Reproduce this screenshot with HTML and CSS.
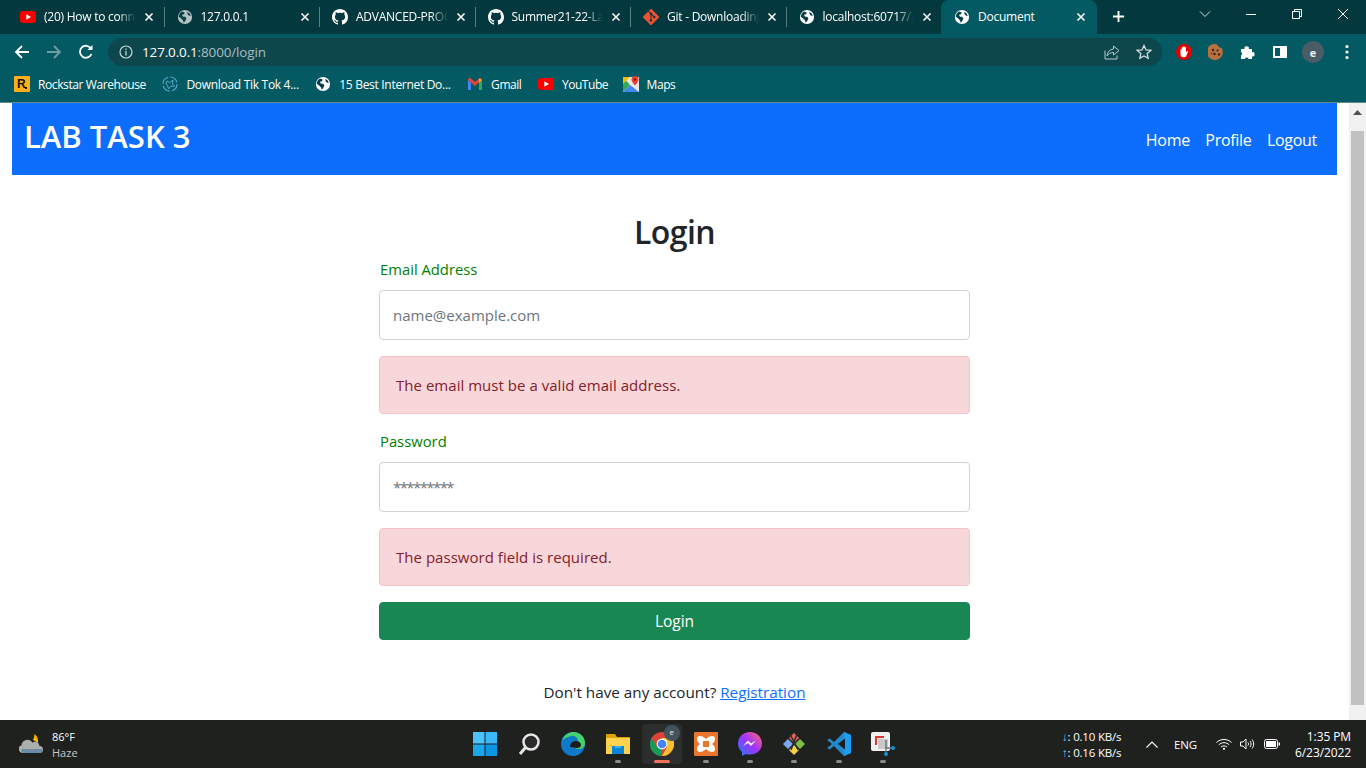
FILE: index.html
```html
<!DOCTYPE html>
<html lang="en">
<head>
<meta charset="utf-8">
<title>Document</title>
<link rel="stylesheet" href="styles.css">
</head>
<body>
<svg class="defs" width="0" height="0" aria-hidden="true">
  <defs>
    <symbol id="yt" viewBox="0 0 16 12"><rect width="16" height="12" rx="3" fill="#f00"/><path d="M6.300 3.200 11 6l-4.700 2.800z" fill="#fff"/></symbol>
    <symbol id="globe" viewBox="-1 -1 18 18"><circle cx="8" cy="8" r="8" fill="currentColor"/><path d="M4.500 1.800 7.600 3 7 5 4.600 5.600 5.700 7.600 8.200 7.800 9.600 9.600 8.400 12.200 6.600 14.600 5.600 11.600 3.400 9.400.9 7.600 2 4zM10.400 2.200l3.200 2.200.8 2.400-2.200-.4L11 5z" fill="#063f46"/></symbol>
    <symbol id="gh" viewBox="0 0 16 16"><path fill="currentColor" d="M8 0C3.580 0 0 3.580 0 8c0 3.540 2.290 6.530 5.470 7.590.4.070.55-.17.55-.38 0-.19-.01-.82-.01-1.490-2.010.37-2.530-.49-2.690-.94-.09-.23-.48-.94-.82-1.130-.28-.15-.68-.52-.01-.53.63-.01 1.080.58 1.230.82.720 1.210 1.870.87 2.330.66.070-.52.280-.87.510-1.070-1.780-.2-3.640-.89-3.640-3.950 0-.87.310-1.590.820-2.150-.08-.2-.36-1.020.080-2.120 0 0 .67-.21 2.200.82.640-.18 1.320-.27 2-.27s1.360.09 2 .27c1.530-1.040 2.200-.82 2.200-.82.440 1.100.16 1.920.08 2.120.51.56.82 1.270.82 2.150 0 3.070-1.870 3.750-3.650 3.950.29.25.54.73.54 1.480 0 1.070-.01 1.930-.01 2.200 0 .21.15.46.55.38A8.010 8.010 0 0 0 16 8c0-4.420-3.580-8-8-8z"/></symbol>
    <symbol id="git" viewBox="0 0 16 16"><path fill="#f05133" d="M15.700 7.300 8.700.3a1 1 0 0 0-1.400 0L5.800 1.800l1.800 1.800a1.200 1.200 0 0 1 1.500 1.500l1.800 1.800a1.200 1.200 0 1 1-.7.7L8.500 6v4.300a1.200 1.200 0 1 1-1-.1V5.900a1.200 1.200 0 0 1-.6-1.600L5.100 2.500.3 7.300a1 1 0 0 0 0 1.400l7 7a1 1 0 0 0 1.400 0l7-7a1 1 0 0 0 0-1.400z"/></symbol>
    <symbol id="x" viewBox="0 0 10 10"><path d="M1.500 1.500l7 7M8.500 1.500l-7 7" stroke="currentColor" stroke-width="1.600" fill="none"/></symbol>
  </defs>
</svg>

<div class="screen">
  <div class="tabstrip">
    <div class="tab tab-first"><svg class="fav fav-yt"><use href="#yt"/></svg><span class="tab-title">(20) How to connect</span><svg class="tab-x"><use href="#x"/></svg></div>
    <div class="tab"><svg class="fav fav-dim"><use href="#globe"/></svg><span class="tab-title">127.0.0.1</span><svg class="tab-x"><use href="#x"/></svg></div>
    <div class="tab"><svg class="fav"><use href="#gh"/></svg><span class="tab-title">ADVANCED-PROGRAMMING</span><svg class="tab-x"><use href="#x"/></svg></div>
    <div class="tab"><svg class="fav"><use href="#gh"/></svg><span class="tab-title">Summer21-22-Lab-Task</span><svg class="tab-x"><use href="#x"/></svg></div>
    <div class="tab"><svg class="fav"><use href="#git"/></svg><span class="tab-title">Git - Downloading</span><svg class="tab-x"><use href="#x"/></svg></div>
    <div class="tab tab-last"><svg class="fav"><use href="#globe"/></svg><span class="tab-title">localhost:60717/?abc</span><svg class="tab-x"><use href="#x"/></svg></div>
    <div class="tab tab-active"><svg class="fav"><use href="#globe"/></svg><span class="tab-title">Document</span><svg class="tab-x"><use href="#x"/></svg></div>
    <svg class="newtab" viewBox="0 0 14 14"><path d="M7 1v12M1 7h12" stroke="#fff" stroke-width="2"/></svg>
    <div class="winctl">
      <svg class="win-ic" viewBox="0 0 12 12"><path d="M1 3.500l5 5 5-5" stroke="#cfdcdd" fill="none"/></svg>
      <svg class="win-ic" viewBox="0 0 12 12"><path d="M1 6.500h10" stroke="#fff"/></svg>
      <svg class="win-ic" viewBox="0 0 12 12"><path d="M1.500 3.500h7v7h-7zM3.500 3.500v-2h7v7h-2" stroke="#fff" fill="none"/></svg>
      <svg class="win-ic" viewBox="0 0 12 12"><path d="M1 1l10 10M11 1 1 11" stroke="#fff"/></svg>
    </div>
  </div>

  <div class="toolbar">
    <svg class="nav-ic" viewBox="0 0 16 16"><path d="M15 8H2M8 2 2 8l6 6" stroke="#fff" stroke-width="1.800" fill="none"/></svg>
    <svg class="nav-ic" viewBox="0 0 16 16"><path d="M1 8h13M8 2l6 6-6 6" stroke="#6f9da1" stroke-width="1.800" fill="none"/></svg>
    <svg class="nav-ic" viewBox="0 0 16 16"><path d="M13.500 10A6 6 0 1 1 13 4.500" stroke="#fff" stroke-width="1.800" fill="none"/><path d="M14.500 1v5h-5z" fill="#fff"/></svg>
    <div class="omnibox">
      <svg class="info" viewBox="0 0 14 14"><circle cx="7" cy="7" r="6" stroke="#c6d4d6" stroke-width="1.200" fill="none"/><path d="M7 6v4.500M7 3.500v1.400" stroke="#c6d4d6" stroke-width="1.300"/></svg>
      <span class="url"><span class="url-host">127.0.0.1</span>:8000/login</span>
      <svg class="omni-ic" viewBox="0 0 16 16"><path d="M1 6.500V15h12v-3.500" stroke="#b6c7c9" fill="none"/><path d="M9.500 2l5.500 4.500-5.500 4.500V8.500C6.500 8.500 4.500 9.500 3 12c.3-4 2.500-6.500 6.500-7z" stroke="#b6c7c9" fill="none"/></svg>
      <svg class="omni-ic star" viewBox="0 0 16 16"><path d="M8 1.500l2 4.400 4.800.5-3.600 3.200 1 4.700L8 11.900l-4.200 2.400 1-4.700L1.200 6.400 6 5.900z" stroke="#d4dfe0" stroke-width="1.300" fill="none"/></svg>
    </div>
    <div class="ext">
      <svg class="ext-ic" viewBox="0 0 16 16"><circle cx="8" cy="8" r="8" fill="#e00000"/><path d="M4.500 8V5.500a.7.7 0 0 1 1.300 0V7.500V3.800a.7.7 0 0 1 1.400 0V7.500V3a.7.7 0 0 1 1.400 0V7.500V3.800a.7.7 0 0 1 1.400 0V8.500l1-1.200c.6-.6 1.400 0 1 .6L10 12.500c-.4.600-.9.800-1.500.8H7c-1.500 0-2.500-1.300-2.500-3z" fill="#fff"/></svg>
      <svg class="ext-ic" viewBox="0 0 16 16"><path d="M9 .3c.2 1.500 1.200 2 2 2 .2 1.200 1.300 1.800 2.600 1.500A8 8 0 1 1 9 .3z" fill="#b8703f"/><g fill="#3b2114"><circle cx="5" cy="6" r="1.200"/><circle cx="9.500" cy="6.500" r="1"/><circle cx="6.500" cy="10" r="1.200"/><circle cx="11" cy="10.500" r="1.200"/><circle cx="3.500" cy="9.500" r=".7"/></g></svg>
      <svg class="ext-ic" viewBox="0 0 16 16"><path d="M1 5h3.500a2.200 2.200 0 1 1 4.300 0H12v3.200a2.200 2.200 0 1 1 0 4.300V15H8.600a2 2 0 0 0-3.800 0H1v-3.500a2 2 0 0 0 0-3.600z" fill="#fff"/></svg>
      <svg class="ext-ic ext-panel" viewBox="0 0 14 12"><path fill="#fff" fill-rule="evenodd" d="M0 0h14v12H0zM2 2v8h5V2z"/></svg>
      <span class="avatar">e</span>
      <svg class="ext-ic dots" viewBox="0 0 4 16"><g fill="#fff"><circle cx="2" cy="2.500" r="1.600"/><circle cx="2" cy="8" r="1.600"/><circle cx="2" cy="13.500" r="1.600"/></g></svg>
    </div>
  </div>

  <div class="bookmarks">
    <div class="bm bm-rock"><svg class="bm-ic" viewBox="0 0 16 16"><rect width="16" height="16" rx="1" fill="#fcaf17"/><text class="rock" x="3" y="12">R</text><rect x="11" y="11" width="2" height="2" fill="#111"/></svg><span>Rockstar Warehouse</span></div>
    <div class="bm"><svg class="bm-ic" viewBox="0 0 16 16"><circle cx="8" cy="8" r="7" stroke="#5ba5c9" stroke-width="1.200" fill="none" stroke-dasharray="9 2"/><path d="M5 5l2.500 1.500L11 4l-.5 4 2 2-4 .5-2 2.500-1-3.500L4 8z" stroke="#5ba5c9" fill="none"/></svg><span>Download Tik Tok 4...</span></div>
    <div class="bm"><svg class="bm-ic bm-globe"><use href="#globe"/></svg><span>15 Best Internet Do...</span></div>
    <div class="bm bm-tight"><svg class="bm-ic" viewBox="0 0 16 12"><path d="M1 12V2l3 2.500V12z" fill="#4285f4"/><path d="M15 12V2l-3 2.500V12z" fill="#34a853"/><path d="M1 2C1 .5 2.500-.5 4 .5L8 4l4-3.500C13.500-.5 15 .5 15 2l-3 2.500L8 8 4 4.500z" fill="#ea4335"/><path d="M12 .6 15 2l-3 2.500z" fill="#fbbc04"/></svg><span>Gmail</span></div>
    <div class="bm bm-tight"><svg class="bm-ic bm-yt"><use href="#yt"/></svg><span>YouTube</span></div>
    <div class="bm bm-tight bm-maps"><svg class="bm-ic" viewBox="0 0 16 16"><path d="M0 1h16v15H0z" fill="#e8e8e8"/><path d="M0 16V1l7 8z" fill="#34a853"/><path d="M0 16l7-7 9 7z" fill="#4285f4"/><path d="M0 1h7L0 8z" fill="#fbbc04"/><path d="M12 0a3.500 3.500 0 0 1 3.500 3.500C15.500 6 12 9.500 12 9.500S8.500 6 8.500 3.500A3.500 3.500 0 0 1 12 0z" fill="#ea4335"/><circle cx="12" cy="3.500" r="1.200" fill="#7d1a10"/></svg><span>Maps</span></div>
  </div>

  <div class="viewport">
    <main class="page">
      <nav class="navbar">
        <a class="brand" href="#">LAB TASK 3</a>
        <div class="nav-links">
          <a href="#">Home</a>
          <a href="#">Profile</a>
          <a href="#">Logout</a>
        </div>
      </nav>
      <form class="login">
        <h1 class="title">Login</h1>
        <label class="label" for="email">Email Address</label>
        <input class="field" id="email" type="text" placeholder="name@example.com">
        <div class="alert">The email must be a valid email address.</div>
        <label class="label" for="pw">Password</label>
        <input class="field field-pw" id="pw" type="text" placeholder="*********">
        <div class="alert">The password field is required.</div>
        <button class="submit" type="button">Login</button>
        <p class="foot">Don't have any account? <a href="#">Registration</a></p>
      </form>
    </main>
    <div class="scrollbar">
      <svg class="sb-arrow" viewBox="0 0 9 5"><path d="M4.500 0 9 5H0z" fill="#505050"/></svg>
      <div class="sb-thumb"></div>
    </div>
  </div>

  <footer class="taskbar">
    <div class="weather">
      <svg class="wx" viewBox="0 0 24 22"><path d="M15 1c2.500 2 4 4.500 3.500 9l-5-3c1-2 1.500-4 1.500-6z" fill="#f4b400"/><path d="M3 20a4 4 0 0 1-1-7.800A6 6 0 0 1 13 9.500a4.500 4.500 0 0 1 7 3.500 3.500 3.500 0 0 1 0 7z" fill="#a9b0ac"/><path d="M3 20a4 4 0 0 1-1-4h21a3.500 3.500 0 0 1-3 4z" fill="#6b8ba3"/></svg>
      <div class="wx-text"><span class="wx-temp">86°F</span><span class="wx-desc">Haze</span></div>
    </div>
    <div class="apps">
      <div class="app"><svg class="app-ic" viewBox="0 0 24 24"><path d="M0 0h11.500v11.500H0z" fill="#4cc2ff"/><path d="M12.500 0H24v11.500H12.500z" fill="#3ab8fb"/><path d="M0 12.500h11.500V24H0z" fill="#1aa7ec"/><path d="M12.500 12.500H24V24H12.500z" fill="#0c95e3"/></svg></div>
      <div class="app"><svg class="app-ic" viewBox="0 0 24 24"><circle cx="14" cy="10" r="7.500" stroke="#e6e6e6" stroke-width="2.500" fill="#2a2a2a"/><path d="M8.500 15.500 3 22" stroke="#e6e6e6" stroke-width="3"/></svg></div>
      <div class="app"><svg class="app-ic" viewBox="0 0 24 24"><circle cx="12" cy="12" r="12" fill="#0f7ac8"/><path d="M1 9C3 2 9 0 13 0c6 0 11 5 11 11 0 4-3 6-6 6s-5-1-5-3 3-1 4-4-3-7-7-6-8 3-9 5z" fill="#47d16c"/><path d="M9 15c0-4 3-6 6-6 3 0 5 2 5 4s-2 3-4 3c-3 0-4-1-7-1z" fill="#1d1d1d"/></svg></div>
      <div class="app"><svg class="app-ic" viewBox="0 0 24 24"><path d="M0 2h9l2 3h13v6H0z" fill="#e0a100"/><path d="M0 6h24v16H0z" fill="#ffd24d"/><path d="M6 14h12v8H6z" fill="#0a84d6"/><path d="M9 14h6v2H9z" fill="#39b0f0"/></svg></div>
      <div class="app app-active">
        <svg class="app-ic" viewBox="0 0 24 24"><circle cx="12" cy="12" r="12" fill="#db4437"/><path d="M12 24a12 12 0 0 1-10.400-18L7 15l5 0z" fill="#0f9d58"/><path d="M12 6h10.400A12 12 0 0 1 12 24l5-9z" fill="#fbc02d"/><circle cx="12" cy="12" r="5.400" fill="#fff"/><circle cx="12" cy="12" r="4.300" fill="#4285f4"/></svg>
        <span class="app-badge">e</span>
      </div>
      <div class="app"><svg class="app-ic" viewBox="0 0 24 24"><rect width="24" height="24" rx="1" fill="#e8762c"/><path d="M6 4c2 0 4 1 6 3 2-2 4-3 6-3 2 0 3 1 3 3 0 2-1 3.500-3 5 2 1.500 3 3 3 5 0 2-1 3-3 3-2 0-4-1-6-3-2 2-4 3-6 3-2 0-3-1-3-3 0-2 1-3.500 3-5-2-1.500-3-3-3-5 0-2 1-3 3-3z" fill="#fff"/><path d="M9 9h6v6H9z" fill="#e8762c"/></svg></div>
      <div class="app"><svg class="app-ic" viewBox="0 0 24 24"><defs><linearGradient id="msg" x1="0" y1="1" x2="1" y2="0"><stop offset="0" stop-color="#1e7dff"/><stop offset=".5" stop-color="#a033ff"/><stop offset="1" stop-color="#ff6968"/></linearGradient></defs><path d="M12 0C5 0 0 5 0 11.500c0 3.500 1.500 6.500 4 8.500v4l3.600-2c1.400.4 2.900.6 4.400.6 7 0 12-5 12-11.100S19 0 12 0z" fill="url(#msg)"/><path d="M5 14l5-5.500 3 3 5-3-5 5.500-3-3z" fill="#fff"/></svg></div>
      <div class="app"><svg class="app-ic" viewBox="0 0 24 24"><path d="M12 1l5 5-5 5-5-5z" fill="#e5645d"/><path d="M1 12l5-5 5 5-5 5z" fill="#7aa7f0"/><path d="M13 12l5-5 5 5-5 5z" fill="#7cc04b"/><path d="M12 13l5 5-5 5-5-5z" fill="#f5d24a"/><path d="M8 2l8 16M15 2 9 18" stroke="#2b2b2b" stroke-width="1.500"/></svg></div>
      <div class="app"><svg class="app-ic" viewBox="0 0 24 24"><path d="M17 0 7 10 2.500 6.500 0 8l5 4-5 4 2.500 1.500L7 14l10 10 7-3V3z" fill="#2489ca"/><path d="M17 0l7 3v18l-7 3z" fill="#1f9cf0"/><path d="M18 6.500 11 12l7 5.500z" fill="#1d1d1d"/></svg></div>
      <div class="app"><svg class="app-ic" viewBox="0 0 24 24"><rect width="19" height="19" rx="2" fill="#f0f0f0"/><path d="M4 4h9v2H6v7H4z" fill="#d93a2b"/><rect x="7" y="7" width="10" height="10" fill="#c8c8c8"/><path d="M15 8v14M14 16h9" stroke="#6b7b86" stroke-width="1.500"/><circle cx="22" cy="16" r="2" fill="#1591d8"/><circle cx="15" cy="22" r="2" fill="#1591d8"/></svg></div>
    </div>
    <div class="tray">
      <div class="net"><span><i class="down">↓</i>: 0.10 KB/s</span><span><i class="up">↑</i>: 0.16 KB/s</span></div>
      <svg class="caret" viewBox="0 0 12 7"><path d="M.5 6.500 6 1l5.500 5.500" stroke="#fff" stroke-width="1.100" fill="none"/></svg>
      <span class="lang">ENG</span>
      <svg class="tray-ic wifi" viewBox="0 0 16 12"><g stroke="#fff" fill="none"><path d="M.5 4.500c4-4 11-4 15 0M2.800 6.800c3-2.800 7.400-2.800 10.400 0M5 9c1.700-1.500 4.300-1.500 6 0"/></g><circle cx="8" cy="10.800" r="1.100" fill="#fff"/></svg>
      <svg class="tray-ic vol" viewBox="0 0 16 12"><g stroke="#fff" fill="none"><path d="M.5 4h2.500L6 1v10L3 8H.5zM8 4.500c.8 1 .8 2 0 3M10 3c1.500 2 1.500 4 0 6M12 1.500c2.300 3 2.300 6 0 9"/></g></svg>
      <svg class="tray-ic batt" viewBox="0 0 16 10"><rect x=".5" y=".5" width="13" height="9" rx="2" stroke="#fff" fill="none"/><rect x="2" y="2" width="10" height="6" fill="#fff"/><path d="M14.500 3.500h1.500v3h-1.500z" fill="#fff"/></svg>
      <div class="clock"><span>1:35 PM</span><span>6/23/2022</span></div>
    </div>
  </footer>
</div>
</body>
</html>
```

FILE: styles.css
```css
* { box-sizing: border-box; }
html, body { margin: 0; padding: 0; width: 1366px; height: 768px; overflow: hidden; }
body { font-family: "Open Sans", "Noto Sans", sans-serif; background: #fff; }
.defs { position: absolute; }
a { text-decoration: none; color: inherit; }
svg { display: block; flex: none; }

.screen { width: 1366px; height: 768px; display: flex; flex-direction: column; }

/* Tab strip */
.tabstrip { height: 34px; background: #03383e; display: flex; align-items: stretch; padding-left: 10px; color: #fff; }
.tab { width: 155.5px; height: 34px; display: flex; align-items: center; padding: 0 10px 0 11px; position: relative; font-size: 12px; letter-spacing: -.25px; }
.tab-first { padding: 0 11px 0 10px; }
.tab::after { content: ""; position: absolute; right: 1px; top: 7px; height: 20px; width: 1px; background: #5a7f83; }
.tab-last::after, .tab-active::after { display: none; }
.tab-active { background: #045a62; border-radius: 8px 8px 0 0; width: 156px; margin-left: -2px; padding-left: 13px; }
.fav { width: 16px; height: 16px; color: #fff; margin-right: 8px; }
.fav-yt { height: 12px; }
.fav-dim { color: #b4c2c4; }
.tab-title { flex: 1; min-width: 0; white-space: nowrap; overflow: hidden; padding-bottom: 2px; -webkit-mask-image: linear-gradient(to left, transparent 0, #000 18px); mask-image: linear-gradient(to left, transparent 0, #000 18px); }
.tab-active .tab-title { -webkit-mask-image: none; mask-image: none; }
.tab-x { width: 10px; height: 10px; color: #fff; margin-left: 8px; margin-right: 1px; }
.newtab { width: 13px; height: 13px; margin: 10px 0 0 15px; }
.winctl { margin-left: auto; display: flex; align-items: flex-start; }
.win-ic { width: 12px; height: 12px; margin: 8px 17px 0; }

/* Toolbar */
.toolbar { height: 36px; background: #045a62; display: flex; align-items: center; padding-left: 14px; }
.nav-ic { width: 16px; height: 16px; margin-right: 16px; }
.omnibox { width: 1054px; height: 28px; margin-left: -2px; background: #0e464e; border-radius: 14px; display: flex; align-items: center; padding-left: 11px; }
.info { width: 14px; height: 14px; margin-right: 9px; }
.url { flex: 1; font-size: 13.500px; letter-spacing: -.15px; color: #a9bdc0; }
.url-host { color: #fff; }
.omni-ic { width: 16px; height: 16px; margin-right: 16px; }
.star { margin-right: 10px; }
.ext { display: flex; align-items: center; padding-left: 14px; }
.ext-ic { width: 16px; height: 16px; margin-right: 16px; }
.ext-panel { width: 14px; height: 12px; margin: 0 15px 0 1px; }
.avatar { width: 22px; height: 22px; border-radius: 50%; background: #4a5c66; color: #e8eeee; font-size: 11px; font-weight: 700; display: flex; align-items: center; justify-content: center; margin-right: 21px; }
.dots { width: 4px; margin: 0; }

/* Bookmarks */
.bookmarks { height: 33px; background: #045a62; border-bottom: 1px solid #5d8b8f; display: flex; align-items: center; padding: 0 0 4px 14px; gap: 16.500px; color: #fff; font-size: 12px; letter-spacing: -.3px; }
.bm { display: flex; align-items: center; gap: 8px; white-space: nowrap; }
.bm-rock { letter-spacing: -.4px; }
.bm-tight { letter-spacing: -.45px; }
.bm-maps { margin-left: -2px; }
.bm-ic { width: 16px; height: 16px; }
.bm-globe { color: #fff; }
.bm-yt { height: 12px; }
.rock { font: 700 12px "Liberation Sans", sans-serif; fill: #111; letter-spacing: 0; }

/* Page */
.viewport { flex: 1; display: flex; min-height: 0; }
.page { width: 1349px; padding: 0 12px; color: #212529; font-size: 16px; line-height: 24px; overflow: hidden; }
.navbar { height: 72px; background: #0d6efd; color: #fff; display: flex; align-items: center; justify-content: space-between; padding: 0 20px 0 12px; }
.brand { font-size: 31px; font-weight: 600; line-height: 1; padding-bottom: 6px; }
.nav-links { display: flex; gap: 15.500px; font-size: 16px; letter-spacing: -.3px; padding-top: 1px; }

.login { width: 591px; margin: 38px auto 0; display: flex; flex-direction: column; }
.title { margin: 0 0 7px; font-size: 32px; line-height: 38px; font-weight: 600; text-align: center; letter-spacing: -.6px; }
.label { color: #008000; font-size: 14.800px; line-height: 22px; margin-bottom: 8px; padding: 0 0 0 1px; height: 24px; }
.field { height: 50px; border: 1px solid #ced4da; border-radius: 4px; padding: 0 13px; font: 15px "Open Sans", sans-serif; margin-bottom: 16px; color: #212529; background: #fff; outline: none; }
.field::placeholder { color: #6c757d; opacity: 1; }
.field-pw::placeholder { letter-spacing: -1.600px; }
.alert { height: 58px; padding: 16px; border: 1px solid #f5c2c7; border-radius: 4px; background: #f8d7da; color: #842029; font-size: 15px; letter-spacing: .03px; line-height: 24px; margin-bottom: 16px; }
.submit { height: 38px; border: 1px solid #198754; border-radius: 4px; background: #198754; color: #fff; font: 15.500px "Open Sans", sans-serif; padding: 0; }
.foot { margin: 40px 0 0; text-align: center; font-size: 15.250px; line-height: 24px; }
.foot a { color: #0d6efd; text-decoration: underline; }

.scrollbar { width: 17px; background: #f1f1f1; display: flex; flex-direction: column; align-items: center; padding-top: 7px; }
.sb-arrow { width: 9px; height: 5px; }
.sb-thumb { width: 13px; height: 574px; margin-top: 16px; background: #c1c1c1; }

/* Taskbar */
.taskbar { height: 48px; background: #1f211f; display: flex; align-items: center; color: #fff; font-size: 11px; }
.weather { width: 463px; display: flex; align-items: center; padding-left: 19px; gap: 8px; }
.wx { width: 25px; height: 22px; }
.wx-text { display: flex; flex-direction: column; line-height: 16px; padding-top: 2px; }
.wx-desc { color: #c9c9c9; }
.apps { display: flex; width: 442px; height: 48px; align-items: center; }
.app { width: 40px; margin: 0 2.100px; height: 40px; display: flex; align-items: center; justify-content: center; position: relative; }
.app::after { content: ""; position: absolute; left: 17px; bottom: 1px; width: 6px; height: 3px; border-radius: 2px; background: #8a8a8a; }
.app:nth-child(-n+3)::after { display: none; }
.app-active { background: #2c2e2d; border-radius: 4px; }
.app-active::after { left: 12px; width: 16px; background: #f0705a; }
.app-ic { width: 24px; height: 24px; }
.app-badge { position: absolute; top: 1px; right: 2px; width: 16px; height: 16px; border-radius: 50%; background: #45535c; color: #e8e8e8; font-size: 8px; line-height: 14px; text-align: center; }
.tray { flex: 1; display: flex; align-items: center; padding-left: 157px; }
.net { width: 84px; display: flex; flex-direction: column; font-size: 11.500px; line-height: 16px; letter-spacing: -.2px; padding-top: 2px; }
.net i { font-style: normal; color: #7cc7ff; }
.caret { width: 12px; height: 7px; margin-right: 16px; }
.lang { width: 24px; margin-right: 18px; font-size: 11.500px; letter-spacing: -.1px; }
.tray-ic { height: 12px; width: 16px; margin-right: 8px; }
.batt { height: 10px; }
.clock { margin-left: auto; padding: 1px 15px 0 0; display: flex; flex-direction: column; align-items: flex-end; font-size: 12px; line-height: 16px; letter-spacing: -.1px; }
```
